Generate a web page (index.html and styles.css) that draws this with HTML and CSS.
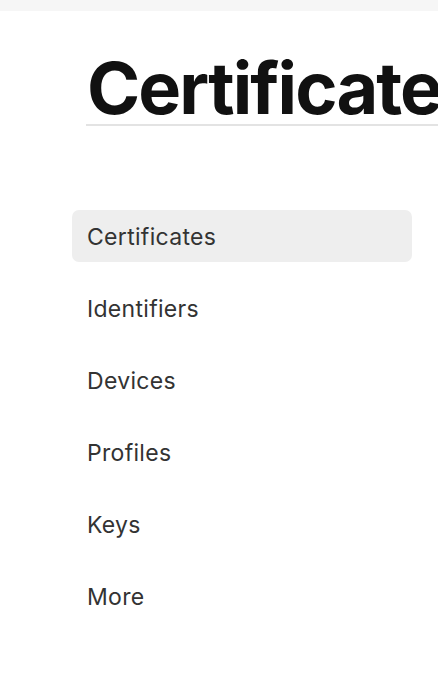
FILE: index.html
```html
<!DOCTYPE html>
<html>
<head>
<meta charset="utf-8">
<link rel="stylesheet" href="styles.css">
</head>
<body>
<div class="topbar"></div>
<div class="header">
  <h1 class="title">Certificates</h1>
</div>
<nav class="nav">
  <a class="nav-item active">Certificates</a>
  <a class="nav-item">Identifiers</a>
  <a class="nav-item">Devices</a>
  <a class="nav-item">Profiles</a>
  <a class="nav-item">Keys</a>
  <a class="nav-item">More</a>
</nav>
</body>
</html>
```
FILE: styles.css
```css
html, body {
  margin: 0;
  padding: 0;
  background: #fff;
  overflow: hidden;
  font-family: Inter, "Noto Sans", sans-serif;
}
.topbar {
  height: 11px;
  background: #f6f6f6;
}
.header {
  margin-left: 86px;
  padding-top: 41px;
  border-bottom: 2px solid #e3e3e3;
  white-space: nowrap;
  overflow: hidden;
}
.title {
  margin: 0;
  padding-left: 1px;
  font-size: 72px;
  line-height: 72px;
  font-weight: 700;
  color: #111;
  letter-spacing: -1.9px;
  height: 72px;
}
.nav {
  margin-top: 84px;
  margin-left: 72px;
  width: 340px;
  display: flex;
  flex-direction: column;
  gap: 20px;
}
.nav-item {
  display: flex;
  align-items: center;
  box-sizing: border-box;
  height: 52px;
  padding-left: 15px;
  padding-top: 2px;
  border-radius: 7px;
  font-size: 23px;
  letter-spacing: 0.3px;
  color: #333;
}
.nav-item.active {
  background: #eeeeee;
}
```
